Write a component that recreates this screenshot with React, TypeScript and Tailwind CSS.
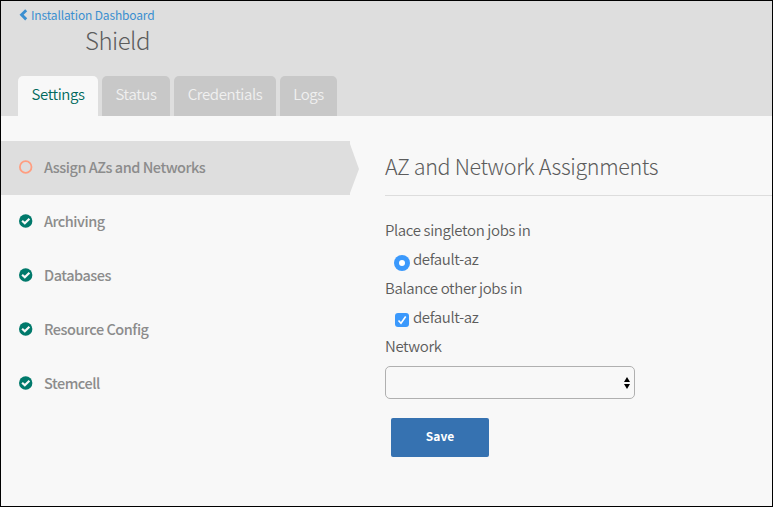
import React from "react";

const tabs = [
  { label: "Settings", box: "w-[80px] bg-[#f8f8f8] text-[#00695c]" },
  { label: "Status", box: "w-[68px] bg-[#c8c8c8] text-[#f0f0f0]" },
  { label: "Credentials", box: "w-[102px] bg-[#c8c8c8] text-[#f0f0f0]" },
  { label: "Logs", box: "w-[57px] bg-[#c8c8c8] text-[#f0f0f0]" },
];

const steps = ["Assign AZs and Networks", "Archiving", "Databases", "Resource Config", "Stemcell"];

function CheckCircle() {
  return (
    <svg className="mb-[3px] h-[14px] w-[14px] shrink-0" viewBox="0 0 14 14">
      <circle cx="6.7" cy="7" r="6.7" fill="#00796b" />
      <path d="M3.1 6.8 5.8 9.3 10.4 4.7" fill="none" stroke="#f8f8f8" strokeWidth="2.2" />
    </svg>
  );
}

function OpenCircle() {
  return (
    <svg className="mb-[3px] h-[14px] w-[14px] shrink-0" viewBox="0 0 14 14">
      <circle cx="6.7" cy="7" r="5.8" fill="none" stroke="#ff9e80" strokeWidth="1.8" />
    </svg>
  );
}

export default function App() {
  return (
    <div className="flex h-[507px] w-[773px] flex-col overflow-hidden border border-black bg-[#f8f8f8] font-['Noto_Sans_CJK_SC',sans-serif] text-[#5c5c5c]">
      <header className="flex h-[115px] flex-col bg-[#dedede]">
        <a className="flex h-[28px] items-center pl-[18px] text-[12px] leading-[20px] tracking-[-0.15px] text-[#3b8fd0]">
          <svg className="mr-[3px] h-[12px] w-[9px]" viewBox="0 0 9 12">
            <path d="M7.2 1.2 2.6 5.8 7.2 10.4" fill="none" stroke="currentColor" strokeWidth="2.9" />
          </svg>
          <span className="whitespace-nowrap">Installation Dashboard</span>
        </a>
        <h1 className="-mt-[2px] pl-[84px] text-[24px] font-light leading-[26px] tracking-[-0.5px]">Shield</h1>
        <nav className="mt-auto flex gap-[4px] pl-[17px]">
          {tabs.map((t) => (
            <div key={t.label} className={`flex h-[40px] justify-center rounded-t-[5px] pt-[6px] text-[15px] font-[350] leading-[24px] tracking-[-0.4px] ${t.box}`}>
              {t.label}
            </div>
          ))}
        </nav>
      </header>
      <div className="flex flex-1 pt-[25px]">
        <aside className="w-[358px]">
          {steps.map((s, i) => (
            <div key={s} className="flex h-[54px]">
              <div className={`flex w-[349px] items-center pl-[18px] text-[14.5px] font-medium leading-[24px] tracking-[-0.48px] text-[#8c8c8c] ${i === 0 ? "bg-[#dedede]" : ""}`}>
                {i === 0 ? <OpenCircle /> : <CheckCircle />}
                <span className="mb-[2px] ml-[11px] whitespace-nowrap">{s}</span>
              </div>
              {i === 0 && (
                <svg className="h-[54px] w-[9px]" viewBox="0 0 9 54">
                  <path d="M0 3 9 28 0 52Z" fill="#dedede" />
                </svg>
              )}
            </div>
          ))}
        </aside>
        <main className="flex flex-1 flex-col pl-[26px]">
          <h2 className="h-[55px] border-b border-[#dddddd] pt-[8px] text-[21.5px] font-light leading-[34px] tracking-[-0.37px]">
            <span className="whitespace-nowrap">AZ and Network Assignments</span>
          </h2>
          <div className="flex flex-col pt-[19px] text-[15px] font-[350] leading-[29px] tracking-[-0.37px]">
            <div>Place singleton jobs in</div>
            <div className="flex items-center pl-[9px]">
              <span className="mr-[3px] mt-[8px] flex h-[16px] w-[16px] items-center justify-center rounded-full bg-[#3b99fc]">
                <span className="h-[6px] w-[6px] rounded-full bg-white" />
              </span>
              <span>default-az</span>
            </div>
            <div>Balance other jobs in</div>
            <div className="flex items-center pl-[10px]">
              <svg className="mr-[4px] mt-[6px] h-[14px] w-[14px]" viewBox="0 0 14 14">
                <rect width="14" height="14" rx="3" fill="#3b99fc" />
                <path d="M3.5 7.4 6 10.3 10.7 3.5" fill="none" stroke="#ffffff" strokeWidth="1.6" />
              </svg>
              <span>default-az</span>
            </div>
            <div>Network</div>
          </div>
          <div className="mt-[6px] flex h-[33px] w-[250px] items-center justify-end rounded-[5px] border border-[#b0b0b0] pr-[4px]">
            <svg className="h-[12px] w-[6px]" viewBox="0 0 6 12">
              <path d="M0 5 3 0 6 5ZM0 7 3 12 6 7Z" fill="#000000" />
            </svg>
          </div>
          <button className="ml-[6px] mt-[19px] flex h-[39px] w-[98px] items-center justify-center rounded-[2px] bg-[#3672b1] pb-[3px] text-[12px] font-bold leading-[18px] text-white">
            Save
          </button>
        </main>
      </div>
    </div>
  );
}
